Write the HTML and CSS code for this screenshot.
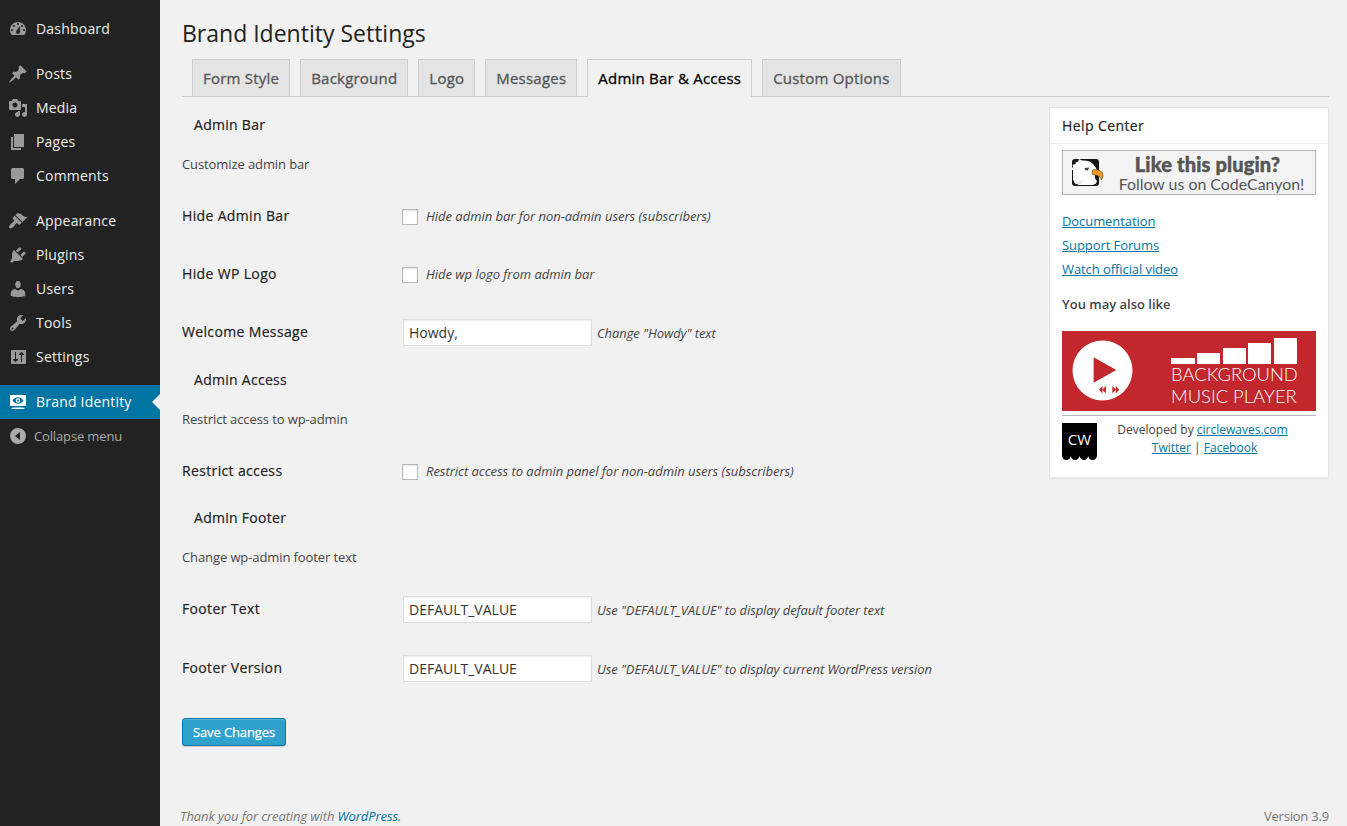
FILE: index.html
```html
<!DOCTYPE html>
<html lang="en">
<head>
<meta charset="utf-8">
<title>Brand Identity Settings</title>
<link rel="stylesheet" href="styles.css">
</head>
<body>
<div class="layout">
<nav class="menu">
  <a class="item"><svg class="icon" viewBox="0 0 20 20"><path fill-rule="evenodd" d="M3.76 16h12.48c1.1-1.37 1.76-3.11 1.76-5 0-4.42-3.58-8-8-8s-8 3.58-8 8c0 1.89.66 3.63 1.76 5zM10 4c.55 0 1 .45 1 1s-.45 1-1 1-1-.45-1-1 .45-1 1-1zM6 6c.55 0 1 .45 1 1s-.45 1-1 1-1-.45-1-1 .45-1 1-1zm8 0c.55 0 1 .45 1 1s-.45 1-1 1-1-.45-1-1 .45-1 1-1zm-5.370 5.550L12 7v6c0 1.100-.9 2-2 2s-2-.9-2-2c0-.57.24-1.080.63-1.450zM4 10c.55 0 1 .45 1 1s-.45 1-1 1-1-.45-1-1 .45-1 1-1zm12 0c.55 0 1 .45 1 1s-.45 1-1 1-1-.45-1-1 .45-1 1-1z"/></svg><span>Dashboard</span></a>
  <a class="item spaced"><svg class="icon" viewBox="0 0 20 20"><path d="M10.440 3.020l1.820-1.820 6.360 6.350-1.830 1.820c-1.050-.68-2.480-.57-3.410.36l-.75.75c-.92.93-1.040 2.350-.35 3.410l-1.830 1.820-2.410-2.410-2.800 2.790c-.42.42-3.380 2.710-3.800 2.290s1.860-3.390 2.280-3.810l2.790-2.790L4.100 9.360l1.830-1.820c1.050.69 2.480.57 3.400-.36l.75-.75c.93-.92 1.050-2.350.36-3.410z"/></svg><span>Posts</span></a>
  <a class="item"><svg class="icon" viewBox="0 0 20 20"><path fill-rule="evenodd" d="M13 11V4c0-.55-.45-1-1-1h-1.670L9 1H5L3.670 3H2c-.55 0-1 .45-1 1v7c0 .55.45 1 1 1h10c.55 0 1-.45 1-1zM7 4.500c1.380 0 2.500 1.120 2.500 2.500S8.380 9.500 7 9.500 4.500 8.380 4.500 7 5.620 4.500 7 4.500zM14 6h5v10.500c0 1.380-1.120 2.500-2.500 2.500S14 17.880 14 16.500s1.120-2.500 2.500-2.500c.17 0 .34.02.5.05V9h-3V6zm-4 8.050V13h2v3.500c0 1.380-1.120 2.500-2.500 2.500S7 17.880 7 16.500 8.120 14 9.500 14c.17 0 .34.02.5.05z"/></svg><span>Media</span></a>
  <a class="item"><svg class="icon" viewBox="0 0 20 20"><path d="M6 15V2h10v13H6zm-1 1h8v2H3V5h2v11z"/></svg><span>Pages</span></a>
  <a class="item"><svg class="icon" viewBox="0 0 20 20"><path d="M4.500 2h10c.8 0 1.500.7 1.500 1.500v8c0 .8-.7 1.500-1.500 1.500H12l-5 5v-5H4.500C3.700 13 3 12.300 3 11.500v-8C3 2.700 3.700 2 4.500 2z"/></svg><span>Comments</span></a>
  <a class="item spaced"><svg class="icon" viewBox="0 0 20 20"><path d="M14.480 11.060L7.410 3.990l1.500-1.500c.5-.56 2.300-.47 3.510.32 1.210.8 1.430 1.280 2.910 2.100 1.180.64 2.450 1.260 4.450.85zm-.71.71L6.700 4.700 4.930 6.470c-.39.39-.39 1.020 0 1.410l1.060 1.060c.39.39.39 1.030 0 1.420-.6.6-1.430 1.110-2.210 1.690-.35.26-.7.53-1.010.84C1.430 14.230.4 16.080 1.400 17.070c.99 1 2.840-.03 4.180-1.360.31-.31.58-.66.85-1.020.57-.78 1.080-1.610 1.690-2.210.39-.39 1.020-.39 1.410 0l1.060 1.060c.39.39 1.020.39 1.410 0z"/></svg><span>Appearance</span></a>
  <a class="item"><svg class="icon" viewBox="0 0 20 20"><path d="M13.110 4.360L9.870 7.600 8 5.730l3.240-3.240c.35-.34 1.050-.2 1.560.32.52.51.66 1.210.31 1.550zm-8 1.770l.91-1.120 9.010 9.010-1.190.84c-.71.71-2.630 1.160-3.820 1.160H6.140L4.900 17.260c-.59.59-1.540.59-2.120 0-.59-.58-.59-1.530 0-2.120l1.240-1.240v-3.880c0-1.130.4-3.190 1.090-3.890zm7.260 3.970l3.240-3.240c.34-.35 1.040-.21 1.550.31.52.51.66 1.210.31 1.550l-3.240 3.250z"/></svg><span>Plugins</span></a>
  <a class="item"><svg class="icon" viewBox="0 0 20 20"><path d="M10 9.250c-2.270 0-2.730-3.440-2.730-3.440C7 4.020 7.820 2 9.970 2c2.160 0 2.980 2.020 2.710 3.810 0 0-.41 3.440-2.680 3.440zm0 2.570L12.720 10c2.390 0 4.520 2.330 4.520 4.530v2.490s-3.650 1.130-7.240 1.130c-3.650 0-7.240-1.130-7.240-1.130v-2.490c0-2.250 1.940-4.480 4.470-4.480z"/></svg><span>Users</span></a>
  <a class="item"><svg class="icon" viewBox="0 0 20 20"><path fill-rule="evenodd" d="M16.680 9.770c-1.340 1.340-3.300 1.670-4.950.99l-5.410 6.520c-.99.99-2.590.99-3.580 0s-.99-2.590 0-3.570l6.520-5.420c-.68-1.650-.35-3.610.99-4.950 1.280-1.280 3.120-1.620 4.720-1.060l-2.890 2.890 2.820 2.820 2.860-2.870c.53 1.580.18 3.390-1.080 4.650zM3.810 16.210c.4.39 1.040.39 1.430 0 .4-.4.4-1.040 0-1.430-.39-.4-1.030-.4-1.430 0-.39.39-.39 1.030 0 1.430z"/></svg><span>Tools</span></a>
  <a class="item"><svg class="icon" viewBox="0 0 20 20"><path fill-rule="evenodd" d="M4 3h13q1 0 1 1v12q0 1-1 1H4q-1 0-1-1V4q0-1 1-1zM7 5v7H5v1l2.500 2L10 13v-1H8V5zM13 15V8h-2V7l2.500-2L16 7v1h-2v7z"/></svg><span>Settings</span></a>
  <a class="item spaced current"><svg class="icon" viewBox="0 0 20 20"><path fill-rule="evenodd" d="M2 3h16v11H2zM4.500 8.500C7.500 4.200 12.500 4.200 15.500 8.500 12.500 12.800 7.500 12.800 4.500 8.500z"/><path fill-rule="evenodd" d="M10 6.300a2.200 2.200 0 1 0 0 4.400 2.200 2.200 0 1 0 0-4.400zM10 7.600a1 1 0 1 1 0 2 1 1 0 1 1 0-2zM5 15.500h10l2 1.500H3z"/></svg><span>Brand Identity</span><i class="notch"></i></a>
  <a class="item collapse"><svg class="icon" viewBox="0 0 20 20"><path fill-rule="evenodd" d="M10 2a8 8 0 1 0 0 16 8 8 0 1 0 0-16zM12 6v8l-5-4z"/></svg><span>Collapse menu</span></a>
</nav>
<main class="main">
  <h1 class="title"><span>Brand Identity Settings</span></h1>
  <div class="tabs">
    <a class="tab">Form Style</a><a class="tab">Background</a><a class="tab">Logo</a><a class="tab">Messages</a><a class="tab active">Admin Bar &amp; Access</a><a class="tab">Custom Options</a>
  </div>
  <div class="columns">
    <form class="form">
      <h3 class="heading">Admin Bar</h3>
      <p class="desc">Customize admin bar</p>
      <div class="row"><label class="label">Hide Admin Bar</label><span class="check"></span><em class="hint">Hide admin bar for non-admin users (subscribers)</em></div>
      <div class="row"><label class="label">Hide WP Logo</label><span class="check"></span><em class="hint">Hide wp logo from admin bar</em></div>
      <div class="row"><label class="label">Welcome Message</label><input class="field" value="Howdy,"><em class="hint beside">Change "Howdy" text</em></div>
      <h3 class="heading">Admin Access</h3>
      <p class="desc">Restrict access to wp-admin</p>
      <div class="row short"><label class="label">Restrict access</label><span class="check"></span><em class="hint">Restrict access to admin panel for non-admin users (subscribers)</em></div>
      <h3 class="heading">Admin Footer</h3>
      <p class="desc">Change wp-admin footer text</p>
      <div class="row"><label class="label">Footer Text</label><input class="field" value="DEFAULT_VALUE"><em class="hint beside">Use "DEFAULT_VALUE" to display default footer text</em></div>
      <div class="row tall"><label class="label">Footer Version</label><input class="field" value="DEFAULT_VALUE"><em class="hint beside">Use "DEFAULT_VALUE" to display current WordPress version</em></div>
      <button class="save" type="button">Save Changes</button>
    </form>
    <aside class="help">
      <h3 class="help-title">Help Center</h3>
      <div class="help-body">
        <div class="follow">
          <svg class="eagle" viewBox="0 0 36 32"><rect x="3" y="3" width="27" height="27" rx="3" fill="#151515"/><path d="M4 23V14l-2-.5 2-2.500-.5-2L7 7.500 6.500 6 9 6l1-3 3 1.500Q21 4 24 8q3 3 4 6l-2 5q-1 3 2 6l-1 2.500-3 1.500H10l-4-1.500q-1-2-2-4z" fill="#fff"/><path d="M5 26q6 1 9-3l-2 5H8z" fill="#e4e4e4"/><path d="M15.500 12l4.500-.5-1 3-3-.5z" fill="#34444c"/><path d="M23.500 14q7-1.500 10 3 1.200 3-1 7-1-5-9-5.500-1-2 0-4.500z" fill="#f59a23" stroke="#674018" stroke-width=".7"/></svg>
          <div class="follow-text"><b>Like this plugin?</b><span>Follow us on CodeCanyon!</span></div>
        </div>
        <ul class="links"><li><a>Documentation</a></li><li><a>Support Forums</a></li><li><a>Watch official video</a></li></ul>
        <p class="also">You may also like</p>
        <div class="player">
          <svg class="disc" viewBox="0 0 62 62"><circle cx="31" cy="31" r="30.500" fill="#fff"/><path d="M22 17.500v26L45 30.500zM34.500 46.500v8l-3.500-4v4L27.500 50.500 31 46.500v4zM41 46.500v8l3.500-4v4l3.500-4-3.500-4v4z" fill="#c1272d"/></svg>
          <div class="player-right">
            <svg class="bars" viewBox="0 0 126 28"><path fill="#fff" d="M0 22h24v6H0zM26 17h23v11H26zM52 12h23v16H52zM77 7h23v21H77zM103 2h23v26h-23z"/></svg>
            <span class="name">BACKGROUND</span><span class="name second">MUSIC PLAYER</span>
          </div>
        </div>
        <div class="credit">
          <div class="cw"><span>CW</span><svg class="waves" viewBox="0 0 35 5"><path d="M0 0h35v1q-1 4-4.500 4T26.200 1q-1 4-4.300 4T17.500 1q-1 4-4.400 4T8.700 1q-1 4-4.300 4T0 1z"/></svg></div>
          <p class="dev">Developed by <a>circlewaves.com</a><br><span class="social"><a>Twitter</a> | <a>Facebook</a></span></p>
        </div>
      </div>
    </aside>
  </div>
  <footer class="footer"><em>Thank you for creating with <a>WordPress.</a></em><span>Version 3.9</span></footer>
</main>
</div>
</body>
</html>
```
FILE: styles.css
```css
* { box-sizing: border-box; }
body { margin: 0; background: #f1f1f1; color: #444; font: 13px/18px "Open Sans", sans-serif; }
h1, h3, p, ul { margin: 0; padding: 0; font-weight: 400; }
.layout { display: flex; width: 1347px; height: 826px; overflow: hidden; }
.menu { width: 160px; flex: none; background: #222; padding-top: 12px; }
.item { display: flex; align-items: center; height: 34px; padding-left: 8px; gap: 8px; color: #eee; font-size: 14px; letter-spacing: .2px; position: relative; }
.icon { width: 20px; height: 20px; fill: #999; flex: none; }
.spaced { margin-top: 11px; }
.current { background: #0074a2; color: #fff; }
.current .icon { fill: #fff; }
.notch { position: absolute; right: 0; top: 9px; border: 8px solid transparent; border-right-color: #f1f1f1; border-left: 0; }
.collapse { color: #aaa; font-size: 13px; gap: 6px; letter-spacing: -.14px; }
.collapse .icon { fill: #aaa; }
.main { flex: 1; display: flex; flex-direction: column; padding: 0 18px 0 22px; }
.title { height: 59px; padding-top: 19px; font-size: 23px; line-height: 29px; color: #222; }
.tabs { display: flex; gap: 10px; height: 38px; padding-left: 10px; border-bottom: 1px solid #ccc; flex: none; }
.tab { height: 37px; padding: 0 10px; border: 1px solid #ccc; border-bottom: 0; background: #e4e4e4; color: #555; font-size: 15px; line-height: 37px; -webkit-text-stroke: .3px; letter-spacing: .22px; white-space: nowrap; }
.tab.active { height: 38px; background: #f1f1f1; color: #000; }
.columns { display: flex; justify-content: space-between; flex: 1; }
.form { padding-top: 9px; width: 850px; }
.heading { height: 38px; padding-left: 12px; font-size: 14px; line-height: 38px; -webkit-text-stroke: .2px; letter-spacing: .28px; color: #222; }
.desc { height: 43px; line-height: 40px; letter-spacing: -.1px; }
.row { display: flex; align-items: center; height: 58px; }
.row.short { height: 57px; }
.row.tall { height: 60px; }
.label { width: 220px; font-size: 14px; -webkit-text-stroke: .2px; letter-spacing: .35px; color: #222; }
.check { width: 16px; height: 16px; margin: 2px 8px 0 0; border: 1px solid #b4b9be; background: #fff; box-shadow: inset 0 1px 2px rgba(0,0,0,.1); }
.field { width: 189px; height: 27px; margin: 0 5px 0 1px; padding: 1px 5px 0; border: 1px solid #ddd; background: #fff; box-shadow: inset 0 1px 2px rgba(0,0,0,.07); color: #333; font: 14px "Open Sans", sans-serif; }
.hint { font-size: 13px; letter-spacing: -.03px; white-space: nowrap; }
.hint.beside { padding-top: 2px; letter-spacing: -.08px; }
.save { display: block; width: 104px; height: 28px; margin-top: 20px; padding: 0; border: 1px solid #0074a2; border-radius: 3px; background: #2ea2cc; box-shadow: inset 0 1px 0 rgba(120,200,230,.5), 0 1px 0 rgba(0,0,0,.15); color: #fff; font: 13px/26px "Open Sans", sans-serif; -webkit-text-stroke: .25px; letter-spacing: -.1px; }
.help { width: 280px; height: 371px; margin-top: 10px; border: 1px solid #e5e5e5; background: #fff; box-shadow: 0 1px 1px rgba(0,0,0,.04); }
.help-title { height: 36px; padding-left: 12px; border-bottom: 1px solid #eee; color: #222; font-size: 14px; line-height: 36px; -webkit-text-stroke: .2px; letter-spacing: .4px; }
.help-body { padding: 6px 12px; }
.follow { display: flex; width: 254px; height: 45px; border: 1px solid #b5b5b5; background: #f3f3f3; padding: 5px 0 0 6px; }
.eagle { width: 36px; height: 32px; flex: none; }
.follow-text { flex: 1; display: flex; flex-direction: column; align-items: center; padding-left: 3px; margin-top: -2px; color: #555; font-family: Lato, sans-serif; font-size: 15.900px; line-height: 17px; white-space: nowrap; }
.follow-text b { font-size: 20px; line-height: 21px; font-weight: 900; -webkit-text-stroke: .4px; letter-spacing: .15px; padding-right: 8px; }
.links { list-style: none; padding-top: 14px; letter-spacing: -.08px; }
.links li { height: 24px; line-height: 24px; }
a { text-decoration: none; }
.links a, .dev a { color: #0074a2; text-decoration: underline; }
.also { height: 50px; line-height: 24px; padding-top: 11px; font-weight: 600; }
.player { display: flex; justify-content: space-between; width: 254px; height: 80px; padding: 9px 18px 0 10px; background: #c1272d; }
.disc { width: 61px; height: 61px; }
.player-right { width: 127px; margin-top: -4px; color: #fff; font: 300 18.400px/22px Lato, sans-serif; }
.bars { width: 126px; height: 28px; display: block; }
.name { display: block; white-space: nowrap; margin-top: -1px; }
.name.second { margin-top: 0; }
.credit { display: flex; width: 254px; margin-top: 4px; border-top: 1px solid #bbb; padding-top: 5px; }
.cw { width: 35px; height: 37px; margin-top: 2px; color: #fff; text-align: center; font: 15px/33px "Open Sans", sans-serif; }
.cw span { display: block; height: 32px; background: #000; }
.waves { display: block; width: 35px; height: 5px; }
.dev { flex: 1; padding-right: 8px; font-size: 12px; text-align: center; }
.social { padding-left: 4px; }
.footer { display: flex; justify-content: space-between; height: 19px; margin-left: -2px; line-height: 19px; color: #777; flex: none; letter-spacing: -.1px; }
.footer span { letter-spacing: -.2px; }
.footer a { color: #0074a2; }
```
